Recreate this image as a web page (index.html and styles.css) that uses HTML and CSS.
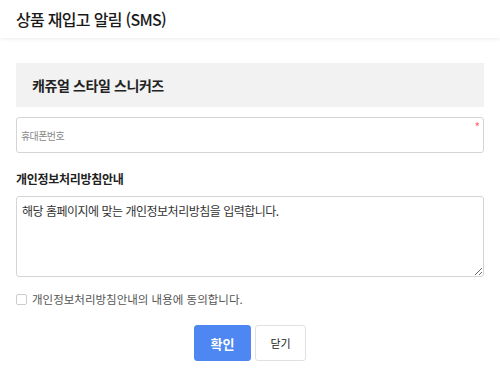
FILE: index.html
```html
<!DOCTYPE html>
<html lang="ko">
<head>
    <meta charset="UTF-8">
    <meta name="viewport" content="width=device-width, initial-scale=1.0">
    <title>상품 재입고 알림 (SMS)</title>
    <link rel="stylesheet" href="styles.css">
</head>
<body>
    <header class="header">
        <h1>상품 재입고 알림 (SMS)</h1>
    </header>

    <div class="content">
        <!-- Product name -->
        <div class="product">캐쥬얼 스타일 스니커즈</div>

        <div class="phone-field">
            <input type="text" class="phone" placeholder="휴대폰번호">
            <span class="required">*</span>
        </div>

        <!-- Privacy notice -->
        <h2 class="label">개인정보처리방침안내</h2>
        <textarea class="notice">해당 홈페이지에 맞는 개인정보처리방침을 입력합니다.</textarea>

        <label class="agree">
            <input type="checkbox">
            <span>개인정보처리방침안내의 내용에 동의합니다.</span>
        </label>

        <div class="buttons">
            <button type="button" class="btn btn-primary">확인</button>
            <button type="button" class="btn">닫기</button>
        </div>
    </div>
</body>
</html>
```

FILE: styles.css
```css
/* Global Styles */
body {
    margin: 0;
    font-family: "Noto Sans CJK KR", "Noto Sans", sans-serif;
    color: #222;
    background: #fff;
}

.header {
    height: 38px;
    padding: 0 16px;
    display: flex;
    align-items: center;
    box-shadow: 0 1px 4px rgba(0, 0, 0, 0.08);
}

.header h1 {
    margin: 0;
    font-size: 16px;
    font-weight: 500;
    letter-spacing: -0.7px;
    color: #1a1a1a;
}

.content {
    padding: 25px 16px 0;
}

.product {
    background-color: #f2f2f2;
    height: 44px;
    padding: 0 16px;
    display: flex;
    align-items: center;
    font-size: 14px;
    font-weight: 700;
    letter-spacing: -0.4px;
    color: #222;
}

.phone-field {
    position: relative;
    margin-top: 10px;
}

.phone {
    width: 100%;
    height: 36px;
    box-sizing: border-box;
    border: 1px solid #d5d5d5;
    border-radius: 3px;
    padding: 0 4px;
    font-family: inherit;
    font-size: 10px;
    letter-spacing: -0.6px;
    outline: none;
}

.phone::placeholder {
    color: #888;
}

.required {
    position: absolute;
    right: 4px;
    top: 1px;
    color: #ff6b6b;
    font-size: 12px;
}

.label {
    margin: 17px 0 9px;
    font-size: 12px;
    font-weight: 700;
    letter-spacing: -0.3px;
    color: #222;
}

.notice {
    display: block;
    width: 100%;
    height: 81px;
    box-sizing: border-box;
    border: 1px solid #d5d5d5;
    border-radius: 3px;
    padding: 5px 5px;
    font-family: inherit;
    font-size: 12px;
    letter-spacing: -0.5px;
    color: #333;
    resize: vertical;
    outline: none;
}

.agree {
    display: flex;
    align-items: center;
    gap: 5px;
    margin-top: 14px;
    font-size: 11.5px;
    color: #555;
}

.agree input {
    margin: 0;
    width: 11px;
    height: 11px;
    appearance: none;
    border: 1px solid #ccc;
    border-radius: 2px;
    background: #fff;
}

.buttons {
    display: flex;
    justify-content: center;
    gap: 4px;
    margin-top: 18px;
}

.btn {
    width: 51px;
    height: 36px;
    border: 1px solid #e0e0e0;
    border-radius: 3px;
    background: #fff;
    font-family: inherit;
    font-size: 11px;
    color: #222;
    cursor: pointer;
}

.btn-primary {
    width: 57px;
    background-color: #4f87f2;
    border-color: #4f87f2;
    color: #fff;
    font-size: 13px;
    font-weight: 700;
}
```
